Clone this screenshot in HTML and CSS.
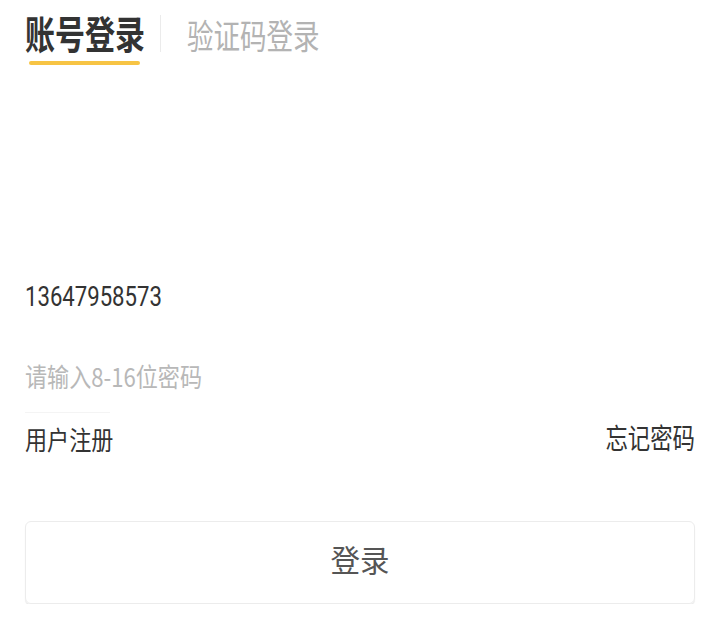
FILE: index.html
```html
<!DOCTYPE html>
<html lang="zh-CN">
<head>
<meta charset="utf-8">
<title>登录</title>
<link rel="stylesheet" href="styles.css">
</head>
<body>
<div class="page">
  <div class="tabs">
    <div class="tab tab-active">
      <span class="tab-text">账号登录</span>
      <div class="tab-bar"></div>
    </div>
    <div class="tab-divider"></div>
    <div class="tab tab-idle">
      <span class="tab-text">验证码登录</span>
    </div>
  </div>

  <div class="phone"><span class="phone-text">13647958573</span></div>
  <div class="password"><span class="password-text">请输入8-16位密码</span></div>
  <div class="field-line"></div>

  <div class="links">
    <span class="link link-left">用户注册</span>
    <span class="link link-right">忘记密码</span>
  </div>

  <div class="login-btn"><span class="login-text">登录</span></div>
</div>
</body>
</html>
```

FILE: styles.css
```css
html, body {
  margin: 0;
  padding: 0;
  background: #ffffff;
}

body {
  font-family: "Noto Sans CJK SC", sans-serif;
  color: #333333;
}

.page {
  padding: 0 25px;
  width: 670px;
}

.tabs {
  display: flex;
  align-items: baseline;
  padding-top: 13px;
}

.tab {
  display: flex;
  flex-direction: column;
  flex: none;
}

.tab-text {
  display: block;
  white-space: nowrap;
  transform-origin: left center;
}

.tab-active {
  width: 120px;
}

.tab-active .tab-text {
  font-size: 39px;
  line-height: 39px;
  font-weight: 700;
  color: #333333;
  transform: scaleX(0.77);
}

.tab-bar {
  margin-top: 9px;
  margin-left: 4px;
  width: 111px;
  height: 4px;
  border-radius: 2px;
  background: #f7c444;
}

.tab-divider {
  align-self: flex-start;
  flex: none;
  width: 1px;
  height: 37px;
  margin-top: 2px;
  margin-left: 15px;
  background: #ebebeb;
}

.tab-idle {
  width: 133px;
  margin-left: 26px;
}

.tab-idle .tab-text {
  font-size: 34px;
  line-height: 34px;
  color: #b3b3b3;
  transform: scaleX(0.78);
}

.phone {
  margin-top: 219px;
  height: 27px;
  font-family: Roboto, sans-serif;
  font-size: 27px;
  line-height: 27px;
  color: #333333;
}

.phone-text {
  display: inline-block;
  transform: scaleX(0.82);
  transform-origin: left center;
  white-space: nowrap;
}

.password {
  margin-top: 52px;
  height: 26px;
  font-size: 26px;
  line-height: 26px;
  color: #b8b8b8;
}

.password-text {
  display: inline-block;
  transform: scaleX(0.85);
  transform-origin: left center;
  white-space: nowrap;
}

.field-line {
  margin-top: 23px;
  width: 85px;
  height: 1px;
  background: #f4f4f4;
}

.links {
  display: flex;
  justify-content: space-between;
  align-items: flex-start;
  margin-top: 10px;
  height: 28px;
}

.link {
  display: inline-block;
  white-space: nowrap;
  color: #333333;
}

.link-left {
  margin-top: 3px;
  font-size: 26px;
  line-height: 26px;
  transform: scaleX(0.85);
  transform-origin: left center;
}

.link-right {
  font-size: 28px;
  line-height: 28px;
  transform: scaleX(0.8);
  transform-origin: right center;
}

.login-btn {
  margin-top: 70px;
  box-sizing: border-box;
  height: 83px;
  border: 1px solid #ececec;
  border-radius: 6px;
  box-shadow: 0 2px 1px rgba(0, 0, 0, 0.08);
  display: flex;
  align-items: center;
  justify-content: center;
  padding-bottom: 8px;
}

.login-text {
  display: inline-block;
  font-size: 31px;
  line-height: 31px;
  color: #555555;
  transform: scaleX(0.95);
  white-space: nowrap;
}
```
